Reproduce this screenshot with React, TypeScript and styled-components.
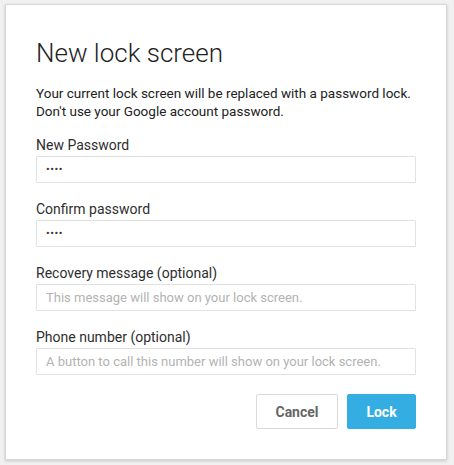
import styled, { createGlobalStyle } from "styled-components";

const GlobalStyle = createGlobalStyle`
  html, body {
    margin: 0;
    padding: 0;
    background: #f1f1f1;
  }
  body {
    font-family: Roboto, "Liberation Sans", Arial, sans-serif;
    -webkit-font-smoothing: antialiased;
  }
`;

const Page = styled.div`
  width: 454px;
  height: 465px;
  padding: 4px 0 0 5px;
  box-sizing: border-box;
`;

const Dialog = styled.div`
  width: 442px;
  height: 456px;
  box-sizing: border-box;
  background: #fff;
  border: 1px solid #d8d8d8;
  box-shadow: 0 1px 3px rgba(0, 0, 0, 0.18);
  padding: 33px 30px 0 30px;
  display: flex;
  flex-direction: column;
`;

const Title = styled.h1`
  margin: 0;
  font-size: 26px;
  line-height: 30px;
  font-weight: 300;
  color: #222;
`;

const Intro = styled.p`
  margin: 16px 0 0 0;
  font-size: 13.5px;
  line-height: 18px;
  color: #222;
`;

const Field = styled.div<{ $first?: boolean }>`
  display: flex;
  flex-direction: column;
  gap: 2px;
  margin-top: ${(props) => (props.$first ? "16px" : "17px")};
`;

const Label = styled.label`
  font-size: 14px;
  line-height: 18px;
  color: #2e2e2e;
`;

const Input = styled.input`
  height: 27px;
  box-sizing: border-box;
  border: 1px solid #e2e2e2;
  border-radius: 1px;
  padding: 0 9px;
  font-family: inherit;
  font-size: 13px;
  color: #333;
  outline: none;
  &::placeholder {
    color: #b3b3b3;
  }
  &[type="password"] {
    font-size: 11px;
    letter-spacing: 0.5px;
  }
`;

const Actions = styled.div`
  display: flex;
  justify-content: flex-end;
  gap: 9px;
  margin-top: 19px;
`;

const Button = styled.button<{ $primary?: boolean }>`
  height: 35px;
  box-sizing: border-box;
  padding: 0;
  width: ${(props) => (props.$primary ? "69px" : "82px")};
  border-radius: 2px;
  font-family: inherit;
  font-size: 14px;
  font-weight: 700;
  cursor: pointer;
  background: ${(props) => (props.$primary ? "#33ade2" : "#fff")};
  color: ${(props) => (props.$primary ? "#fff" : "#666")};
  border: 1px solid ${(props) => (props.$primary ? "#33ade2" : "#dadada")};
`;

export default function App() {
  return (
    <>
      <GlobalStyle />
      <Page>
        <Dialog>
          <Title>New lock screen</Title>
          <Intro>
            Your current lock screen will be replaced with a password lock.
            <br />
            Don't use your Google account password.
          </Intro>

          <Field $first>
            <Label>New Password</Label>
            <Input type="password" defaultValue="1234" />
          </Field>
          <Field>
            <Label>Confirm password</Label>
            <Input type="password" defaultValue="1234" />
          </Field>
          <Field>
            <Label>Recovery message (optional)</Label>
            <Input placeholder="This message will show on your lock screen." />
          </Field>
          <Field>
            <Label>Phone number (optional)</Label>
            <Input placeholder="A button to call this number will show on your lock screen." />
          </Field>

          <Actions>
            <Button>Cancel</Button>
            <Button $primary>Lock</Button>
          </Actions>
        </Dialog>
      </Page>
    </>
  );
}
